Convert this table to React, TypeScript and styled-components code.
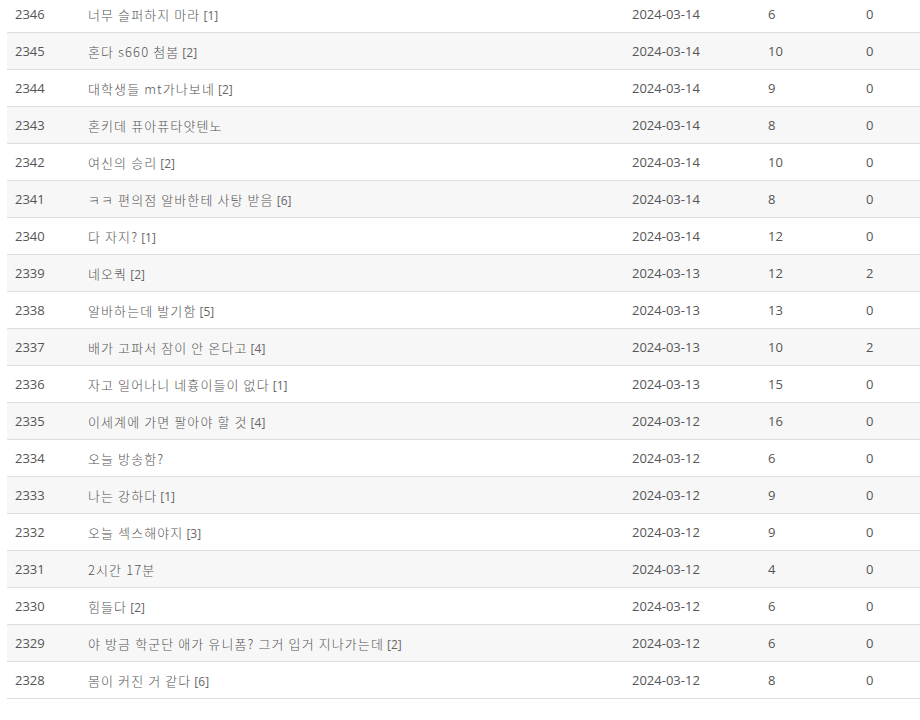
import React from "react";
import styled, { createGlobalStyle } from "styled-components";

const GlobalStyle = createGlobalStyle`
   html, body {
      margin: 0;
      padding: 0;
      background: #fff;
   }
   body {
      font-family: "Open Sans", "Noto Sans CJK KR", sans-serif;
      overflow: hidden;
   }
`;

interface Post {
   no: number,
   title: string,
   comments?: number,
   date: string,
   views: number,
   likes: number,
}

const posts: Post[] = [
   { no: 2346, title: "너무 슬퍼하지 마라", comments: 1, date: "2024-03-14", views: 6, likes: 0 },
   { no: 2345, title: "혼다 s660 첨봄", comments: 2, date: "2024-03-14", views: 10, likes: 0 },
   { no: 2344, title: "대학생들 mt가나보네", comments: 2, date: "2024-03-14", views: 9, likes: 0 },
   { no: 2343, title: "혼키데 퓨아퓨타얏텐노", date: "2024-03-14", views: 8, likes: 0 },
   { no: 2342, title: "여신의 승리", comments: 2, date: "2024-03-14", views: 10, likes: 0 },
   { no: 2341, title: "ㅋㅋ 편의점 알바한테 사탕 받음", comments: 6, date: "2024-03-14", views: 8, likes: 0 },
   { no: 2340, title: "다 자지?", comments: 1, date: "2024-03-14", views: 12, likes: 0 },
   { no: 2339, title: "네오쿽", comments: 2, date: "2024-03-13", views: 12, likes: 2 },
   { no: 2338, title: "알바하는데 발기함", comments: 5, date: "2024-03-13", views: 13, likes: 0 },
   { no: 2337, title: "배가 고파서 잠이 안 온다고", comments: 4, date: "2024-03-13", views: 10, likes: 2 },
   { no: 2336, title: "자고 일어나니 네흉이들이 없다", comments: 1, date: "2024-03-13", views: 15, likes: 0 },
   { no: 2335, title: "이세계에 가면 팔아야 할 것", comments: 4, date: "2024-03-12", views: 16, likes: 0 },
   { no: 2334, title: "오늘 방송함?", date: "2024-03-12", views: 6, likes: 0 },
   { no: 2333, title: "나는 강하다", comments: 1, date: "2024-03-12", views: 9, likes: 0 },
   { no: 2332, title: "오늘 섹스해야지", comments: 3, date: "2024-03-12", views: 9, likes: 0 },
   { no: 2331, title: "2시간 17분", date: "2024-03-12", views: 4, likes: 0 },
   { no: 2330, title: "힘들다", comments: 2, date: "2024-03-12", views: 6, likes: 0 },
   { no: 2329, title: "야 방금 학군단 애가 유니폼? 그거 입거 지나가는데", comments: 2, date: "2024-03-12", views: 6, likes: 0 },
   { no: 2328, title: "몸이 커진 거 같다", comments: 6, date: "2024-03-12", views: 8, likes: 0 },
];

const ListWrapper = styled.div`
   margin-top: -4px;
   padding-left: 7px;
`;

const Row = styled.div<{ $striped: boolean }>`
   display: grid;
   grid-template-columns: 73px 544px 136px 98px 1fr;
   height: 36px;
   align-items: center;
   border-bottom: 1px solid #dddddd;
   background: ${(p) => (p.$striped ? "#f7f7f7" : "#ffffff")};
   color: #555555;
   font-size: 13px;
`;

const Cell = styled.div`
   padding-left: 8px;
   white-space: nowrap;
   overflow: hidden;
`;

const TitleCell = styled(Cell)`
   font-family: "Noto Sans CJK KR", "Open Sans", sans-serif;
   font-weight: 300;
   letter-spacing: 1.1px;
   color: #555555;
`;

const CommentCount = styled.span`
   font-family: "Open Sans", sans-serif;
   font-weight: 400;
   font-size: 12px;
   letter-spacing: 0;
   color: #666666;
   margin-left: 3px;
`;

const App: React.FC = () => {
   return (
      <>
         <GlobalStyle />
         <ListWrapper>
            {posts.map((post, idx) => (
               <Row key={post.no} $striped={idx % 2 === 1}>
                  <Cell>{post.no}</Cell>
                  <TitleCell>
                     {post.title}
                     {post.comments !== undefined && <CommentCount>[{post.comments}]</CommentCount>}
                  </TitleCell>
                  <Cell>{post.date}</Cell>
                  <Cell>{post.views}</Cell>
                  <Cell>{post.likes}</Cell>
               </Row>
            ))}
         </ListWrapper>
      </>
   );
};

export default App;
